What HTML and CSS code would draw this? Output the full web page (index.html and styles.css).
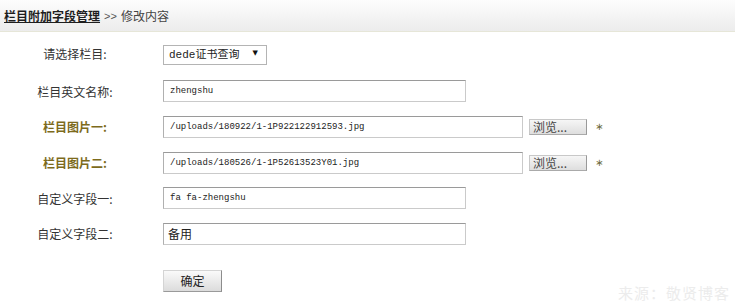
FILE: index.html
```html
<!DOCTYPE html>
<html lang="zh-CN">
<head>
    <meta charset="UTF-8">
    <title>修改内容</title>
    <link rel="stylesheet" href="styles.css">
</head>
<body>
    <div class="topbar">
        <a class="crumb-main" href="#">栏目附加字段管理</a>
        <span class="crumb-sep">&gt;&gt;</span>
        <span class="crumb-sub">修改内容</span>
    </div>

    <form class="edit-form">
        <div class="row">
            <label class="label">请选择栏目:</label>
            <div class="field">
                <div class="select-wrap">
                    <select class="select">
                        <option>dede证书查询</option>
                    </select>
                    <span class="select-arrow">▼</span>
                </div>
            </div>
        </div>

        <div class="row">
            <label class="label">栏目英文名称:</label>
            <div class="field">
                <input type="text" class="text-input" value="zhengshu">
            </div>
        </div>

        <div class="row">
            <label class="label label-pic">栏目图片一:</label>
            <div class="field">
                <input type="text" class="text-input wide" value="/uploads/180922/1-1P922122912593.jpg">
                <button type="button" class="browse-btn">浏览...</button>
                <span class="star">∗</span>
            </div>
        </div>

        <div class="row">
            <label class="label label-pic">栏目图片二:</label>
            <div class="field">
                <input type="text" class="text-input wide" value="/uploads/180526/1-1P52613523Y01.jpg">
                <button type="button" class="browse-btn">浏览...</button>
                <span class="star">∗</span>
            </div>
        </div>

        <div class="row">
            <label class="label">自定义字段一:</label>
            <div class="field">
                <input type="text" class="text-input" value="fa fa-zhengshu">
            </div>
        </div>

        <div class="row">
            <label class="label">自定义字段二:</label>
            <div class="field">
                <input type="text" class="text-input cjk" value="备用">
            </div>
        </div>

        <div class="submit-row">
            <button type="button" class="ok-btn">确定</button>
        </div>
    </form>

    <div class="watermark">来源：敬贤博客</div>
</body>
</html>
```

FILE: styles.css
```css
body {
    margin: 0;
    font-family: "Noto Sans CJK SC", "Liberation Sans", sans-serif;
    font-size: 12px;
    color: #333;
    background: #fff;
    position: relative;
    height: 304px;
    overflow: hidden;
}

.topbar {
    height: 31px;
    border-bottom: 1px solid #e6e6d8;
    background: linear-gradient(#fdfdfd, #ececec);
    display: flex;
    align-items: center;
    padding-left: 4px;
    gap: 4px;
}

.crumb-main {
    color: #1e1e1e;
    font-weight: bold;
    text-decoration: underline;
}

.crumb-sep {
    color: #555;
    font-family: "Liberation Sans", sans-serif;
    font-size: 11px;
}

.crumb-sub {
    color: #444;
}

.edit-form {
    padding-top: 4px;
}

.row {
    display: grid;
    grid-template-columns: 150px 1fr;
    column-gap: 13px;
    align-items: center;
    height: 35.6px;
}

.row:nth-child(2) {
    padding-top: 2px;
}

.label {
    text-align: center;
    color: #333;
}

.label-pic {
    color: #7d6b1c;
    font-weight: bold;
}

.field {
    display: flex;
    align-items: center;
}

.select-wrap {
    position: relative;
    width: 104px;
    height: 20px;
}

.select {
    appearance: none;
    -webkit-appearance: none;
    width: 104px;
    height: 20px;
    margin: 0;
    padding: 0 0 0 5px;
    border: 1px solid #b4b4b4;
    background: #fff;
    font-family: "Liberation Mono", "Noto Sans CJK SC", monospace;
    font-size: 11px;
    color: #222;
}

.select-arrow {
    position: absolute;
    right: 9px;
    top: 5px;
    font-family: "DejaVu Sans", sans-serif;
    font-size: 7px;
    color: #111;
    pointer-events: none;
}

.text-input {
    box-sizing: border-box;
    width: 303px;
    height: 22px;
    margin: 0;
    padding: 0 6px;
    border: 1px solid #cacaca;
    border-top-color: #9a9a9a;
    border-left-color: #b0b0b0;
    background: #fff;
    font-family: "Liberation Mono", monospace;
    font-size: 9px;
    color: #222;
}

.text-input.wide {
    width: 360px;
}

.text-input.cjk {
    font-family: "Noto Sans CJK SC", sans-serif;
    font-size: 12px;
    padding-left: 4px;
}

.browse-btn {
    margin-left: 6px;
    width: 58px;
    height: 16px;
    padding: 0 0 0 3px;
    text-align: left;
    border: 1px solid #c8c8c8;
    border-right-color: #999;
    border-bottom-color: #aaa;
    background: linear-gradient(#f6f6f6, #dedede);
    font-family: "Noto Sans CJK SC", sans-serif;
    font-size: 12px;
    line-height: 14px;
    color: #444;
}

.star {
    margin-left: 8px;
    color: #6d6a40;
    font-size: 10px;
    font-family: "DejaVu Sans", sans-serif;
}

.submit-row {
    padding: 18px 0 0 163px;
}

.ok-btn {
    width: 59px;
    height: 22px;
    padding: 0;
    border: 1px solid #d4d4d4;
    border-right-color: #8c8c8c;
    border-bottom-color: #9a9a9a;
    background: linear-gradient(#fafafa, #dcdcdc);
    font-family: "Noto Sans CJK SC", sans-serif;
    font-size: 12px;
    color: #222;
}

.watermark {
    position: absolute;
    right: 5px;
    bottom: 1px;
    font-size: 15px;
    color: #ececec;
    letter-spacing: 1px;
}
```
